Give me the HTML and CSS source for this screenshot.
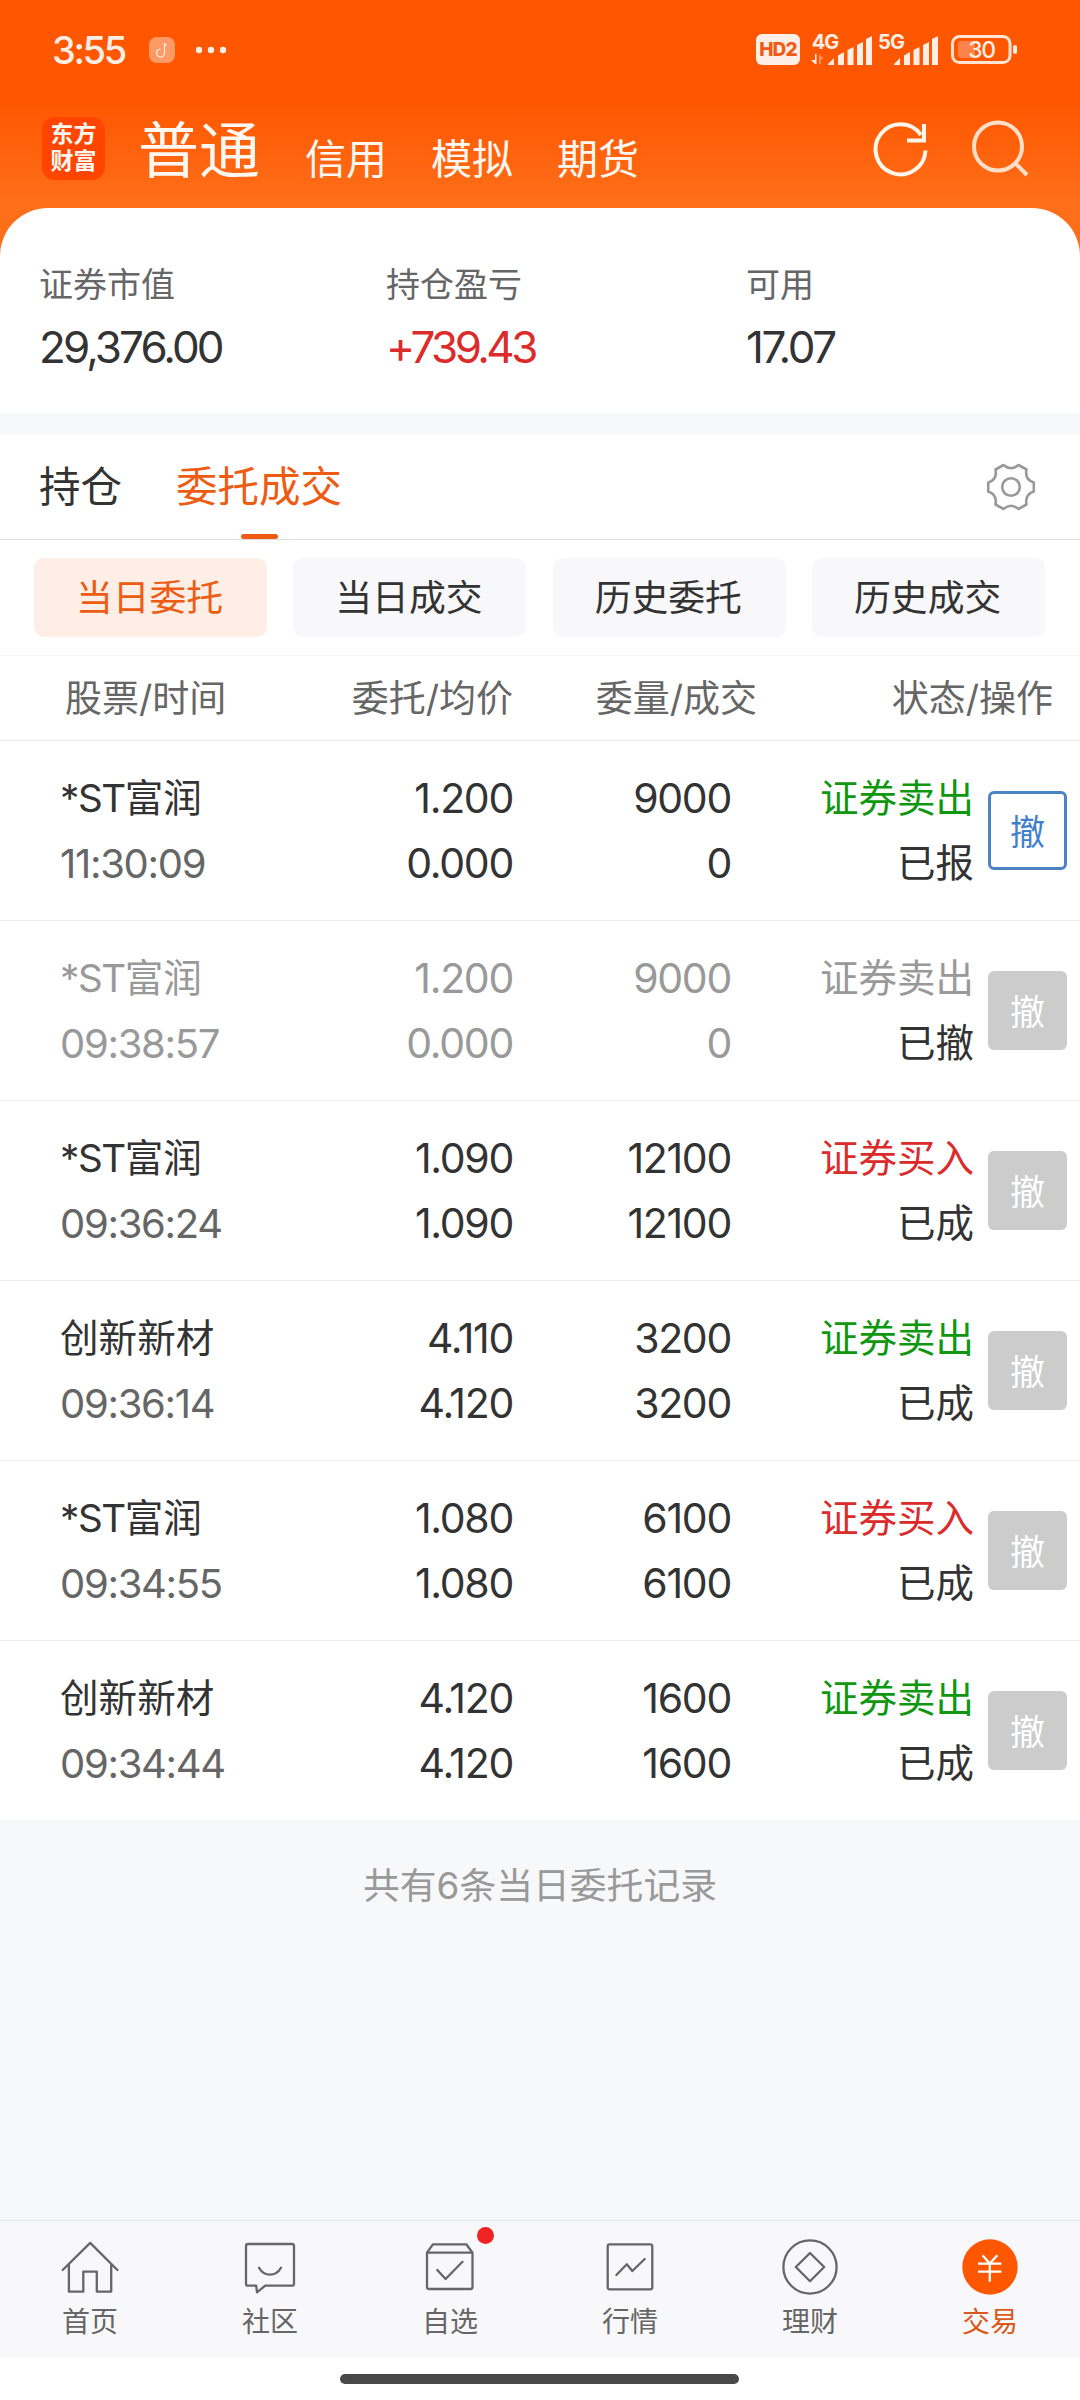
FILE: index.html
```html
<!DOCTYPE html>
<html lang="zh-CN">
<head>
<meta charset="utf-8">
<title>交易</title>
<link rel="stylesheet" href="styles.css">
</head>
<body>
<div class="app">
  <div class="top">
    <div class="status">
      <span class="clock">3:55</span>
      <svg class="note" width="26" height="26" viewBox="0 0 26 26"><rect width="26" height="26" rx="8" fill="#ff9a66"/><path d="M15.500 6v9.500a4 4 0 1 1-4-3.500M15.500 6q.5 2 2 2.500" fill="none" stroke="#fff0e6" stroke-width="1.200"/></svg>
      <svg class="dots" width="32" height="8" viewBox="0 0 32 8" fill="#ffeee5"><circle cx="4" cy="4" r="3.200"/><circle cx="16" cy="4" r="3.200"/><circle cx="28" cy="4" r="3.200"/></svg>
      <svg class="signals" width="264" height="34" viewBox="0 0 264 34" fill="#ffeee5">
        <rect x="0" y="1" width="44" height="31" rx="6"/>
        <text x="22" y="23" class="hd">HD2</text>
        <text x="69" y="15.500" class="net">4G</text>
        <path d="M59 21v10l-4-4h4zM59 21h1.500v10h-1.500z"/><path d="M63 21l5 5h-3v5h-2z" opacity=".4"/>
        <path d="M72 31l6-6v7h-6zM82 22.500l6-3.500v13h-6zM91.500 17l6-3v18h-6zM101 12l6-3v23h-6zM110 6l6-3v29h-6z"/>
        <text x="135" y="15.500" class="net">5G</text>
        <path d="M138 31l6-6v7h-6zM148 22.500l6-3.500v13h-6zM157.500 17l6-3v18h-6zM167 12l6-3v23h-6zM176 6l6-3v29h-6z"/>
        <rect x="196.500" y="3.500" width="57.500" height="26" rx="7" fill="none" stroke="#ffe3d3" stroke-width="3"/>
        <rect x="202" y="8" width="17" height="17" rx="3" fill="#ff8348"/>
        <rect x="257" y="12" width="4" height="9" rx="2"/>
        <text x="225.500" y="25" class="pct">30</text>
      </svg>
    </div>
    <header class="head">
      <div class="logo"><div>东方</div><div>财富</div></div>
      <span class="mode-main">普通</span>
      <span class="mode">信用</span>
      <span class="mode">模拟</span>
      <span class="mode">期货</span>
      <svg class="tools" width="130" height="64" viewBox="0 0 130 64" fill="none" stroke-width="4">
        <path d="M51.500 33.500A25 25 0 1 1 47 18" stroke="#fff5ea"/><path d="M50 7v17.500M33 23.500H52" stroke="#fff5ea"/>
        <g stroke="#ffdfc8"><circle cx="124" cy="29.500" r="24"/><path d="M141 46l12 12"/></g>
      </svg>
    </header>
    <section class="summary">
      <div><p class="k">证券市值</p><p class="v v1">29,376.00</p></div>
      <div><p class="k">持仓盈亏</p><p class="v v2 up">+739.43</p></div>
      <div><p class="k">可用</p><p class="v v3">17.07</p></div>
    </section>
  </div>

  <nav class="tabs">
    <span class="tab">持仓</span>
    <span class="tab on">委托成交</span>
    <svg class="gear" width="52" height="52" viewBox="-26 -26 52 52" fill="none" stroke="#999" stroke-width="2.600" stroke-linejoin="round"><path d="M-7.500-22Q0-15.500 7.500-22L15.500-17.500Q13.500-7.500 22.800-4.500V4.500Q13.500 7.500 15.500 17.500L7.500 22Q0 15.500-7.500 22L-15.500 17.500Q-13.500 7.500-22.800 4.500V-4.500Q-13.500-7.500-15.500-17.500Z"/><circle r="8.800"/></svg>
  </nav>
  <div class="chips">
    <span class="chip on">当日委托</span><span class="chip">当日成交</span><span class="chip">历史委托</span><span class="chip">历史成交</span>
  </div>
  <div class="cols"><span>股票/时间</span><span>委托/均价</span><span>委量/成交</span><span>状态/操作</span></div>

  <main class="orders">
    <div class="row"><div class="name"><i>*ST</i>富润<small>11:30:09</small></div><div>1.200<br>0.000</div><div>9000<br>0</div><div class="st"><b class="sell">证券卖出</b>已报</div><button class="cancel live">撤</button></div>
    <div class="row gone"><div class="name"><i>*ST</i>富润<small>09:38:57</small></div><div>1.200<br>0.000</div><div>9000<br>0</div><div class="st"><b>证券卖出</b>已撤</div><button class="cancel">撤</button></div>
    <div class="row"><div class="name"><i>*ST</i>富润<small>09:36:24</small></div><div>1.090<br>1.090</div><div>12100<br>12100</div><div class="st"><b class="buy">证券买入</b>已成</div><button class="cancel">撤</button></div>
    <div class="row"><div class="name">创新新材<small>09:36:14</small></div><div>4.110<br>4.120</div><div>3200<br>3200</div><div class="st"><b class="sell">证券卖出</b>已成</div><button class="cancel">撤</button></div>
    <div class="row"><div class="name"><i>*ST</i>富润<small>09:34:55</small></div><div>1.080<br>1.080</div><div>6100<br>6100</div><div class="st"><b class="buy">证券买入</b>已成</div><button class="cancel">撤</button></div>
    <div class="row"><div class="name">创新新材<small>09:34:44</small></div><div>4.120<br>4.120</div><div>1600<br>1600</div><div class="st"><b class="sell">证券卖出</b>已成</div><button class="cancel">撤</button></div>
  </main>
  <p class="total">共有6条当日委托记录</p>

  <footer class="nav">
    <div class="item"><svg class="ico" viewBox="0 0 60 60"><path d="M2.700 33L30.200 5.900 57.400 33M8.900 27.500V54.700H23.300V34.700H36.800V54.700H51.200V27.500"/></svg>首页</div>
    <div class="item"><svg class="ico" viewBox="0 0 60 60"><path d="M8 7H52a2 2 0 0 1 2 2V46.700a2 2 0 0 1-2 2H25.200L17 55.300 16.200 48.700H8a2 2 0 0 1-2-2V9a2 2 0 0 1 2-2ZM19 30.700Q23 37.700 30 37.700T41 30.700"/></svg>社区</div>
    <div class="item"><svg class="ico" viewBox="0 0 60 60"><path d="M7 15.700L12.900 7.300H46.300L52.500 15.700V50a2 2 0 0 1-2 2H9a2 2 0 0 1-2-2ZM7 15.700H52.500M17.300 33L25.600 42 42.500 24.700"/></svg><i class="badge"></i>自选</div>
    <div class="item"><svg class="ico" viewBox="0 0 60 60"><rect x="7.700" y="7.300" width="44.600" height="45" rx="2"/><path d="M16.400 38L26.800 27.300 32.300 34 44.700 22"/></svg>行情</div>
    <div class="item"><svg class="ico" viewBox="0 0 60 60"><circle cx="30" cy="30" r="26.600"/><path d="M30 16L44.200 30 30 44.200 15.800 30Z"/></svg>理财</div>
    <div class="item on"><svg class="ico" viewBox="0 0 60 60"><circle cx="30" cy="30" r="27.700" class="coin"/><path d="M22.500 18.300L29.800 26.500 37.300 18.300M18 26.700H41.400M18 34.700H41.400M29.800 26.500V44.700" class="yen"/></svg>交易</div>
  </footer>
  <div class="home"><span></span></div>
</div>
</body>
</html>
```
FILE: styles.css
```css
* { box-sizing: border-box; }
body, p { margin: 0; }
body { font-family: Inter, "Noto Sans CJK SC", sans-serif; color: #333; background: #fff; }
svg { display: block; flex: none; overflow: visible; }
.app { width: 1080px; height: 2400px; display: flex; flex-direction: column; background: #f7f8fa; }

.top { background: linear-gradient(#ff5600 0, #ff5600 100px, #ff6f1a 205px); height: 413px; flex: none; }
.status { height: 100px; display: flex; align-items: center; padding: 0 64px 0 52px; }
.clock { width: 97px; font-size: 38px; font-weight: 500; letter-spacing: -2.4px; color: #ffeee5; }
.dots { margin-left: 20px; }
.signals { margin-left: auto; margin-right: -4px; }
.hd, .net, .pct { font-family: Inter, sans-serif; text-anchor: middle; }
.hd { font-size: 19px; font-weight: 800; letter-spacing: -.8px; fill: #f05a14; }
.net { font-size: 20px; font-weight: 700; letter-spacing: -1px; }
.pct { font-size: 23px; font-weight: 500; letter-spacing: -1.5px; }

.head { height: 108px; display: flex; align-items: flex-start; padding: 17px 0 0 42px; color: #fff8f2; }
.logo { width: 63px; height: 63px; border-radius: 13px; background: #ff4500; font-size: 23px; font-weight: 700; line-height: 27px; text-align: center; padding-top: 4px; margin-right: 33px; }
.mode-main { font-size: 61px; line-height: 68px; margin-right: 43px; width: 124px; white-space: nowrap; }
.mode { font-size: 41px; line-height: 50px; padding-top: 17px; width: 126px; white-space: nowrap; }
.tools { margin-left: 191px; }

.summary { height: 205px; background: #fff; border-radius: 48px 48px 0 0; display: grid; grid-template-columns: 347px 360px 1fr; padding: 48px 0 0 39px; }
.k { font-size: 34px; line-height: 58px; color: #666; }
.v { font-size: 44px; line-height: 67px; white-space: nowrap; }
.v1 { letter-spacing: -2.9px; }
.v2 { letter-spacing: -3.6px; }
.v3 { letter-spacing: -2.4px; }
.up { color: #db2b2b; }

.tabs { margin-top: 21px; height: 106px; flex: none; background: #fff; border-bottom: 1px solid #ddd; display: flex; align-items: center; padding: 0 43px 0 39px; font-size: 41.500px; gap: 54px; }
.tab { height: 105px; line-height: 106px; position: relative; }
.tab.on { color: #ee5b12; }
.tab.on::after { content: ""; position: absolute; left: 50%; bottom: 0; width: 37px; height: 5px; margin-left: -18px; border-radius: 3px; background: #ee5b12; }
.gear { margin-left: auto; }

.chips { height: 116px; flex: none; background: #fff; border-bottom: 1px solid #f5f5f5; padding: 18px 34px; display: grid; grid-template-columns: repeat(4, 233px); gap: 26.4px; }
.chip { height: 79px; border-radius: 10px; background: #f8f8fa; font-size: 36.800px; line-height: 80px; text-align: center; padding-right: 2px; }
.chip.on { background: #ffeee5; color: #ee5b12; }

.cols { height: 85px; flex: none; background: #fff; border-bottom: 1px solid #e9e9e9; color: #666; font-size: 37px; line-height: 85px; display: grid; grid-template-columns: 200px 248px 244px 296px; padding-left: 65px; text-align: right; }
.cols span:first-child { text-align: left; }

.row { height: 180px; background: #fff; border-bottom: 1px solid #ececec; display: grid; grid-template-columns: 200px 253px 218px 243px 79px; align-items: center; padding-left: 60px; font-size: 41px; line-height: 65px; letter-spacing: -1.3px; text-align: right; }
.orders .row:last-child { height: 179px; border-bottom: 0; }
.row .name { text-align: left; font-size: 38.600px; letter-spacing: 0; white-space: nowrap; }
.name i { font-style: normal; letter-spacing: -1.4px; }
.row small { display: block; font-size: 40px; color: #666; letter-spacing: -1.3px; }
.row .st { font-size: 38.500px; letter-spacing: 0; }
.st b { display: block; font-weight: 400; }
.sell { color: #0f970f; }
.buy { color: #db2b2b; }
.gone, .gone small { color: #999; }
.gone .st { color: #333; }
.gone b { color: #999; }
.cancel { width: 79px; height: 79px; margin-left: 14px; padding: 0 0 3px; border: 0; border-radius: 6px; background: #ccc; color: #fff; font: 35px/75px "Noto Sans CJK SC", sans-serif; }
.cancel.live { background: #fff; border: 3px solid #4a84c4; color: #3f80cc; line-height: 69px; }

.total { text-align: center; margin-top: 37px; font-size: 36.8px; line-height: 58px; color: #999; }

.nav { margin-top: auto; height: 139px; flex: none; border-top: 1px solid #e2e5e8; background: #f8f8fa; display: grid; grid-template-columns: repeat(6, 1fr); }
.nav { height: 138px; }
.item { position: relative; display: flex; flex-direction: column; align-items: center; padding-top: 16px; font-size: 28px; line-height: 50px; color: #666; }
.ico { width: 60px; height: 60px; fill: none; stroke: #666; stroke-width: 2.3; stroke-linejoin: round; stroke-linecap: round; }
.item.on { color: #d95a1c; }
.ico .coin { fill: #ff5600; stroke: none; }
.ico .yen { stroke: #fff; stroke-linecap: butt; }
.badge { position: absolute; left: 117px; top: 6px; width: 17px; height: 17px; border-radius: 50%; background: #ee2424; }
.home { height: 42px; flex: none; background: #fff; padding: 16px 0 0 340px; }
.home span { display: block; width: 399px; height: 10px; border-radius: 5px; background: #484848; }
```
